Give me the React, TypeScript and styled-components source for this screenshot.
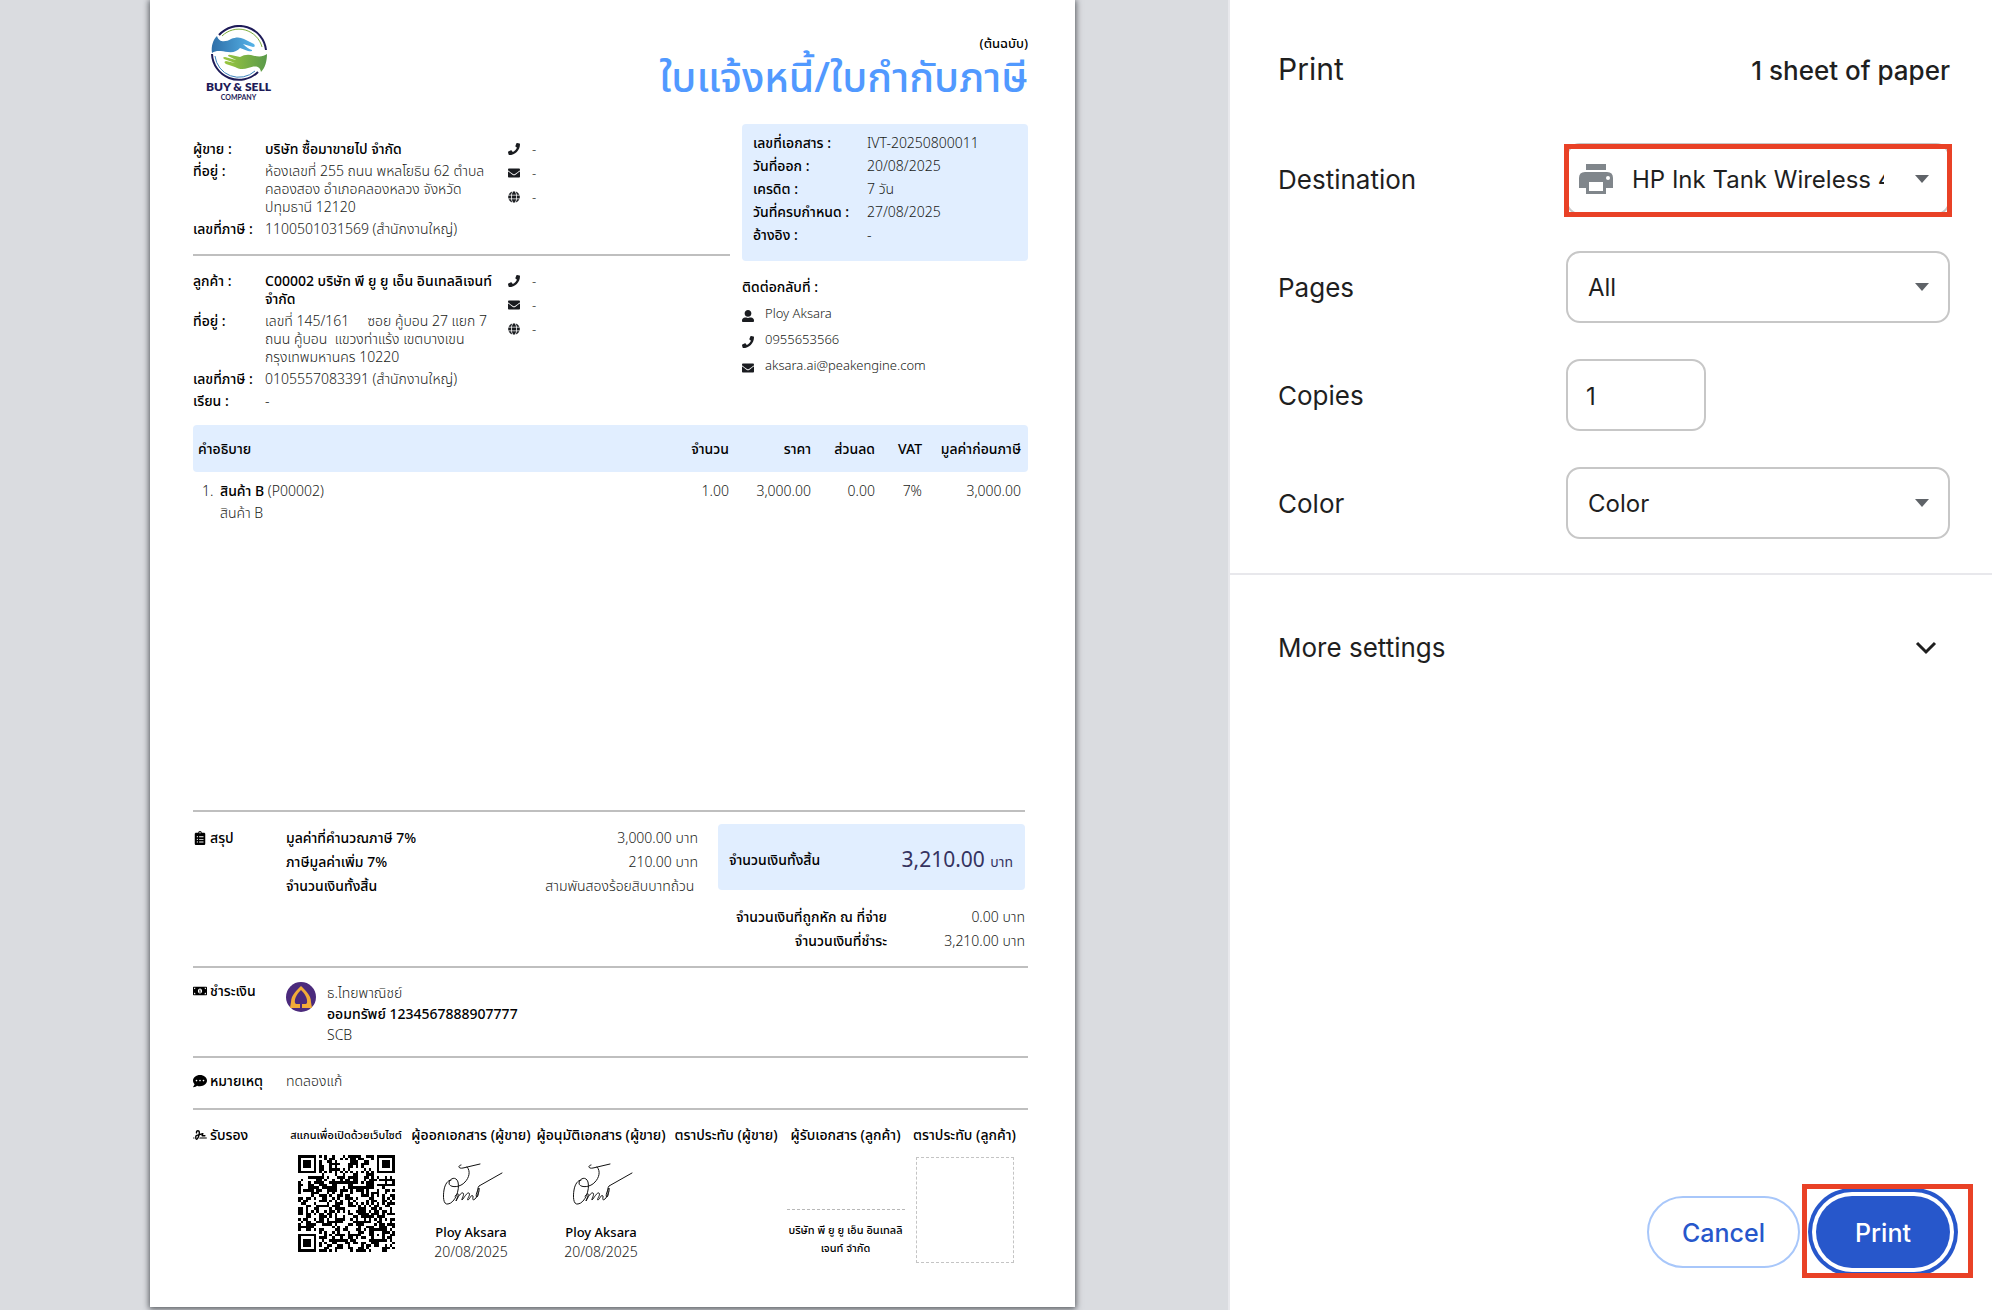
import React, { useState } from "react";
import styled, { createGlobalStyle } from "styled-components";
import { FaClipboardList, FaCommentDots, FaEnvelope, FaGlobe, FaMoneyBillAlt, FaPhone, FaUserAlt } from "react-icons/fa";
import { FaSignature } from "react-icons/fa6";

const THAI = `"Noto Sans", "Noto Sans Thai", sans-serif`;
const UI = `Inter, "Liberation Sans", sans-serif`;
const LINE = "#bfbfbf";
const TINT = "#e1eeff";
const BLUE = "#2757cb";
const INK = "#1a1c20";

const GlobalStyle = createGlobalStyle`
  *, *::before, *::after { box-sizing: border-box; }
  body { margin: 0; background: #fff; }
  h1, h2, p, dl, dd, dt { margin: 0; font: inherit; }
`;

/* ---------- shell ---------- */

const Shell = styled.div`
  display: flex;
  min-height: 100vh;
`;

const Preview = styled.main`
  flex: 1;
  min-width: 0;
  padding: 0 153px 3px 150px;
  background: #dadce0;
  display: flex;
`;

const Sheet = styled.article`
  flex: 1;
  min-width: 0;
  padding: 0 47px 0 43px;
  background: #fff;
  color: ${INK};
  font: 300 14px/18px ${THAI};
  box-shadow: 0 1px 6px 1px rgba(40, 44, 50, 0.75);
  display: flex;
  flex-direction: column;
`;

const Sidebar = styled.aside`
  flex: 0 0 764px;
  border-left: 2px solid #e8e8ec;
  background: #fff;
  color: #1f1f1f;
  font: 400 26px/32px ${UI};
  display: flex;
  flex-direction: column;
`;

/* ---------- document head ---------- */

const DocHead = styled.header`
  display: flex;
  justify-content: space-between;
  height: 124px;
`;

const Logo = styled.div`
  display: flex;
  flex-direction: column;
  align-items: center;
  padding: 25px 0 0 13px;
  color: #1e1b58;
  font-family: Lato, sans-serif;
`;

const LogoName = styled.span`
  font-size: 12px;
  font-weight: 800;
  line-height: 12px;
`;

const LogoSub = styled.span`
  font-size: 7px;
  font-weight: 700;
  line-height: 8px;
`;

const TitleBlock = styled.div`
  display: flex;
  flex-direction: column;
  align-items: flex-end;
  padding-top: 34px;
  color: #000;
  font-size: 13px;
  font-weight: 500;
`;

const DocTitle = styled.h1`
  color: #5199ff;
  font-size: 41px;
  font-weight: 500;
  line-height: 48px;
  white-space: nowrap;
`;

/* ---------- parties ---------- */

const Parties = styled.div`
  display: grid;
  grid-template-columns: minmax(0, 1fr) 286px;
  column-gap: 12px;
  min-height: 301px;
`;

const Party = styled.section`
  display: grid;
  grid-template-columns: 315px 1fr;
  padding-top: 16px;
`;

const Facts = styled.dl<{ $label: number; $gap: number }>`
  display: grid;
  grid-template-columns: ${(p) => p.$label}px 1fr;
  row-gap: ${(p) => p.$gap}px;
  align-content: start;
  white-space: nowrap;
`;

const Term = styled.dt`
  color: #000;
  font-weight: 500;
`;

const Value = styled.dd<{ $strong?: boolean }>`
  color: ${(p) => (p.$strong ? "#000" : "inherit")};
  font-weight: ${(p) => (p.$strong ? 500 : 300)};
  white-space: pre;
`;

const IconList = styled.div<{ $gap: number; $icon: number; $low?: boolean }>`
  display: grid;
  grid-template-columns: ${(p) => p.$icon}px 1fr;
  row-gap: ${(p) => p.$gap}px;
  align-content: start;
  align-items: ${(p) => (p.$low ? "end" : "center")};
  font-size: 13px;

  svg { width: 12px; height: 12px; display: block; }
`;

const Rule = styled.hr<{ $top?: number; $end?: number }>`
  border: 0;
  height: 2px;
  width: auto;
  margin: ${(p) => p.$top || 0}px ${(p) => p.$end || 0}px 0 0;
  background: ${LINE};
`;

const InfoBox = styled.div`
  height: 137px;
  padding: 10px 11px;
  border-radius: 4px;
  background: ${TINT};
`;

const ReturnTo = styled.section`
  padding-top: 17px;
  display: grid;
  row-gap: 8px;
`;

/* ---------- items ---------- */

const Items = styled.table`
  width: 100%;
  border-collapse: collapse;
  table-layout: fixed;

  th, td { padding: 0; text-align: right; white-space: nowrap; }
  th { height: 47px; background: ${TINT}; color: #000; font-weight: 500; }
  th:first-child { border-radius: 4px 0 0 4px; text-align: left; padding-left: 5px; }
  th:last-child { border-radius: 0 4px 4px 0; }
  th:last-child, td:last-child { padding-right: 7px; }
  td { vertical-align: top; padding-top: 10px; }
  td:first-child { text-align: left; padding-left: 9px; }
`;

const ItemCell = styled.div`
  display: grid;
  grid-template-columns: 18px 1fr;
  row-gap: 4px;

  p { grid-column: 2; }
`;

const Strong = styled.strong`
  color: #000;
  font-weight: 500;
`;

/* ---------- lower sections ---------- */

const Lower = styled.div`
  margin-top: auto;
`;

const Band = styled.section<{ $h: number; $top: number }>`
  display: grid;
  grid-template-columns: 93px minmax(0, 1fr);
  min-height: ${(p) => p.$h}px;
  padding-top: ${(p) => p.$top}px;
`;

const BandTitle = styled.h2`
  display: flex;
  align-items: flex-start;
  gap: 3px;
  color: #000;
  font-weight: 500;
  white-space: nowrap;

  svg { width: auto; height: 14px; margin-top: 2px; flex: none; }
`;

const Summary = styled.div`
  display: grid;
  grid-template-columns: 412px minmax(0, 1fr);
  column-gap: 20px;
  padding-right: 3px;
`;

const Lines = styled.dl<{ $cols: string }>`
  display: grid;
  grid-template-columns: ${(p) => p.$cols};
  row-gap: 6px;
  align-content: start;
  white-space: nowrap;

  dd { text-align: right; }
`;

const TotalBox = styled.div`
  display: flex;
  align-items: center;
  justify-content: space-between;
  height: 66px;
  margin: -5px 0 18px;
  padding: 6px 12px 0 11px;
  border-radius: 4px;
  background: ${TINT};
  color: #35335f;
`;

const TotalAmount = styled.span`
  font-size: 21px;
  font-weight: 400;
  line-height: 32px;

  small { font-size: 14px; }
`;

const DueLines = styled(Lines)`
  dt { text-align: right; }
`;

const Bank = styled.div`
  display: grid;
  grid-template-columns: 41px 1fr;

  p { line-height: 21px; }
`;

const Signers = styled.div`
  display: grid;
  grid-template-columns: 120px 130px 130px 120px 119px 119px;
  text-align: center;
  white-space: nowrap;
`;

const Signer = styled.div`
  display: flex;
  flex-direction: column;
  align-items: center;
  color: #000;
`;

const SignerTitle = styled.span<{ $small?: boolean }>`
  font-size: ${(p) => (p.$small ? 11 : 14)}px;
  font-weight: 500;
`;

const Signature = styled.svg`
  margin: 19px 0 17px 4px;
`;

const SignName = styled(Strong)`
  font-size: 13px;
`;

const SignDate = styled.span`
  color: ${INK};
  margin-top: 2px;
`;

const SignLine = styled.div`
  width: 118px;
  margin: 65px 0 11px;
  border-top: 1px dashed #b8b8b8;
`;

const SignCompany = styled.span`
  font-size: 11px;
  font-weight: 500;
`;

const StampBox = styled.div`
  width: 98px;
  height: 106px;
  margin-top: 13px;
  border: 1px dashed #c4c4c4;
`;

const QrWrap = styled.div`
  margin-top: 11px;
  line-height: 0;
`;

/* ---------- print settings ---------- */

const SideHead = styled.header`
  display: flex;
  justify-content: space-between;
  align-items: baseline;
  padding: 51px 42px 56px 48px;
  font-weight: 500;

  h1 { font-size: 30px; line-height: 36px; font-weight: 400; }
`;

const Fields = styled.div`
  display: grid;
  row-gap: 36px;
  padding: 0 42px 34px 48px;
`;

const Field = styled.div`
  display: grid;
  grid-template-columns: 1fr 384px;
  align-items: center;
  font-size: 26px;

  label { padding-top: 2px; }
`;

const Control = styled.div`
  position: relative;
  display: flex;
`;

const Box = `
  height: 72px;
  border: 2px solid #c7c7c7;
  border-radius: 14px;
  background: #fff;
  color: #1f1f1f;
  font: 400 24px/32px ${UI};
`;

const Select = styled.select<{ $icon?: boolean }>`
  ${Box}
  width: 100%;
  appearance: none;
  padding: 2px 64px 0 ${(p) => (p.$icon ? 64 : 20)}px;
`;

const NumberInput = styled.input`
  ${Box}
  width: 140px;
  padding: 2px 18px 0;
`;

const Caret = styled.span`
  position: absolute;
  right: 21px;
  top: 32px;
  border: 7px solid transparent;
  border-top: 8px solid #5f6368;
  border-bottom: 0;
  pointer-events: none;
`;

const PrinterIcon = styled.svg`
  position: absolute;
  left: 13px;
  top: 21px;
  pointer-events: none;
`;

const Marker = styled.span<{ $inset: string }>`
  position: absolute;
  inset: ${(p) => p.$inset};
  border: 5px solid #e94126;
  pointer-events: none;
`;

const MoreButton = styled.button`
  display: flex;
  justify-content: space-between;
  align-items: center;
  padding: 57px 55px 57px 48px;
  border: 0;
  border-top: 2px solid #e8e8ec;
  background: none;
  color: inherit;
  font: inherit;
`;

const Actions = styled.footer`
  display: flex;
  justify-content: flex-end;
  gap: 16px;
  margin-top: auto;
  padding: 0 42px 42px 0;
`;

const Pill = styled.button<{ $primary?: boolean }>`
  height: 72px;
  width: ${(p) => (p.$primary ? 134 : 153)}px;
  border-radius: 36px;
  border: ${(p) => (p.$primary ? "0" : "2px solid #a8c7fa")};
  background: ${(p) => (p.$primary ? BLUE : "#fff")};
  color: ${(p) => (p.$primary ? "#fff" : BLUE)};
  box-shadow: ${(p) => (p.$primary ? `0 0 0 4px #fff, 0 0 0 8px ${BLUE}` : "none")};
  padding: 2px 0 0;
  font: 500 25px/32px ${UI};
`;

/* ---------- drawings ---------- */

function HandsLogo() {
  return (
    <svg width="56" height="56" viewBox="0 0 56 56" fill="none" aria-hidden="true">
      <defs>
        <linearGradient id="sky" x1="0" x2="1"><stop stopColor="#2f6fa8" /><stop offset="1" stopColor="#56b4e9" /></linearGradient>
        <linearGradient id="leaf" x1="0" x2="1"><stop stopColor="#9cc83f" /><stop offset="1" stopColor="#5a9a4a" /></linearGradient>
      </defs>
      <path d="M8 10A27 27 0 0 1 55 25" stroke="#1e1b58" strokeWidth="2" />
      <path d="M11 11A24 24 0 0 1 51 22" stroke="#7fae3c" strokeWidth="1" />
      <path d="M1 29A27 27 0 0 0 47 47" stroke="#1e1b58" strokeWidth="2" />
      <path d="M4 31A24 24 0 0 0 44 46" stroke="#3c84bd" strokeWidth="1" />
      <path d="M6 11C8 18 15 17 20 14C25 12 29 12 33 14L43 19Q45 22 42 22L32 19Q37 24 41 25Q42 27 37 26L29 23Q25 28 17 27C10 26 5 25 1 28C0 21 2 15 6 11Z" fill="url(#sky)" />
      <path d="M50 47C49 40 43 41 37 43C32 45 27 44 24 42L15 39Q12 37 15 36L24 38L13 34Q11 32 14 32L25 35L17 31Q17 29 20 30L29 32Q34 29 40 30C47 32 52 32 56 29C56 36 54 43 50 47Z" fill="url(#leaf)" />
    </svg>
  );
}

const QR_SIZE = 37;

function isDark(x: number, y: number) {
  const far = QR_SIZE - 7;
  const corner = (cx: number, cy: number) => x >= cx - 1 && x <= cx + 7 && y >= cy - 1 && y <= cy + 7;
  for (const [cx, cy] of [[0, 0], [far, 0], [0, far]]) {
    if (corner(cx, cy)) {
      const d = Math.max(Math.abs(x - cx - 3), Math.abs(y - cy - 3));
      return d === 3 || d < 2;
    }
  }
  const a = Math.max(Math.abs(x - 30), Math.abs(y - 30));
  if (a <= 2) return a !== 1;
  if (x === 6 || y === 6) return (x + y) % 2 === 0;
  const n = Math.sin(x * 127 + y * 311 + 17) * 43758;
  return n - Math.floor(n) < 0.52;
}

function QrCode() {
  let d = "";
  for (let y = 0; y < QR_SIZE; y++)
    for (let x = 0; x < QR_SIZE; x++) if (isDark(x, y)) d += `M${x} ${y}h1v1h-1z`;
  return (
    <svg width="97" height="97" viewBox="0 0 37 37" shapeRendering="crispEdges" role="img" aria-label="QR">
      <path d={d} />
    </svg>
  );
}

function Signed() {
  return (
    <Signature width="60" height="43" viewBox="0 0 60 43" fill="none" stroke="#111" strokeWidth="1" strokeLinecap="round" strokeLinejoin="round" aria-hidden="true">
      <path d="M18 2C14 3 16 6 20 5L37 1M24 4C28 8 26 15 22 19C17 25 6 25 6 20C7 15 13 13 15 19C17 27 12 40 5 41C0 42 0 33 1 27C2 21 5 17 8 17" />
      <path d="M12 33C14 31 16 29 15 33L13 38C15 34 18 29 20 30C22 31 18 37 19 37C21 35 24 29 26 30C28 32 23 37 25 37C27 36 28 31 30 33C30 36 29 38 32 36C34 34 37 28 36 25C34 28 32 34 34 34C37 31 33 27 36 23L59 10" />
    </Signature>
  );
}

function BankLogo() {
  return (
    <svg width="30" height="30" viewBox="0 0 30 30" aria-hidden="true">
      <circle cx="15" cy="15" r="15" fill="#4b2a7c" />
      <path fill="#f2ab38" fillRule="evenodd" d="M15 4C11 8 5 13 5 20L4 26H14V22H10L9 21C8 16 12 11 15 8C18 11 22 16 21 21L20 22H16V26H26L25 20C25 13 19 8 15 4Z" />
    </svg>
  );
}

/* ---------- data ---------- */

const seller = [
  ["ผู้ขาย :", "บริษัท ซื้อมาขายไป จำกัด"],
  ["ที่อยู่ :", "ห้องเลขที่ 255 ถนน พหลโยธิน 62 ตำบล\nคลองสอง อำเภอคลองหลวง จังหวัด\nปทุมธานี 12120"],
  ["เลขที่ภาษี :", "1100501031569 (สำนักงานใหญ่)"],
];

const customer = [
  ["ลูกค้า :", "C00002 บริษัท พี ยู ยู เอ็น อินเทลลิเจนท์\nจำกัด"],
  ["ที่อยู่ :", "เลขที่ 145/161     ซอย คู้บอน 27 แยก 7\nถนน คู้บอน  แขวงท่าแร้ง เขตบางเขน\nกรุงเทพมหานคร 10220"],
  ["เลขที่ภาษี :", "0105557083391 (สำนักงานใหญ่)"],
  ["เรียน :", "-"],
];

const info = [
  ["เลขที่เอกสาร :", "IVT-20250800011"],
  ["วันที่ออก :", "20/08/2025"],
  ["เครดิต :", "7 วัน"],
  ["วันที่ครบกำหนด :", "27/08/2025"],
  ["อ้างอิง :", "-"],
];

function PartyBlock({ rows }: { rows: string[][] }) {
  return (
    <Party>
      <Facts $label={72} $gap={4}>
        {rows.map(([k, v], i) => (
          <React.Fragment key={k}>
            <Term>{k}</Term>
            <Value $strong={i === 0}>{v}</Value>
          </React.Fragment>
        ))}
      </Facts>
      <IconList $icon={24} $gap={6}>
        <FaPhone /><span>-</span>
        <FaEnvelope /><span>-</span>
        <FaGlobe /><span>-</span>
      </IconList>
    </Party>
  );
}

function Invoice() {
  return (
    <Sheet lang="th">
      <DocHead>
        <Logo>
          <HandsLogo />
          <LogoName>BUY &amp; SELL</LogoName>
          <LogoSub>COMPANY</LogoSub>
        </Logo>
        <TitleBlock>
          <span>(ต้นฉบับ)</span>
          <DocTitle>ใบแจ้งหนี้/ใบกำกับภาษี</DocTitle>
        </TitleBlock>
      </DocHead>

      <Parties>
        <div>
          <PartyBlock rows={seller} />
          <Rule $top={16} />
          <PartyBlock rows={customer} />
        </div>
        <div>
          <InfoBox>
            <Facts $label={114} $gap={5}>
              {info.map(([k, v]) => (
                <React.Fragment key={k}>
                  <Term>{k}</Term>
                  <Value>{v}</Value>
                </React.Fragment>
              ))}
            </Facts>
          </InfoBox>
          <ReturnTo>
            <Strong>ติดต่อกลับที่ :</Strong>
            <IconList $icon={23} $gap={8} $low>
              <FaUserAlt /><span>Ploy Aksara</span>
              <FaPhone /><span>0955653566</span>
              <FaEnvelope /><span>aksara.ai@peakengine.com</span>
            </IconList>
          </ReturnTo>
        </div>
      </Parties>

      <Items>
        <colgroup>
          <col />
          <col width="100" />
          <col width="82" />
          <col width="64" />
          <col width="47" />
          <col width="106" />
        </colgroup>
        <thead>
          <tr>
            <th>คำอธิบาย</th><th>จำนวน</th><th>ราคา</th><th>ส่วนลด</th><th>VAT</th><th>มูลค่าก่อนภาษี</th>
          </tr>
        </thead>
        <tbody>
          <tr>
            <td>
              <ItemCell>
                <span>1.</span>
                <span><Strong>สินค้า B</Strong> (P00002)</span>
                <p>สินค้า B</p>
              </ItemCell>
            </td>
            <td>1.00</td><td>3,000.00</td><td>0.00</td><td>7%</td><td>3,000.00</td>
          </tr>
        </tbody>
      </Items>

      <Lower>
        <Rule $end={3} />
        <Band $h={154} $top={17}>
          <BandTitle><FaClipboardList />สรุป</BandTitle>
          <Summary>
            <Lines $cols="1fr auto">
              <Term>มูลค่าที่คำนวณภาษี 7%</Term><Value>3,000.00 บาท</Value>
              <Term>ภาษีมูลค่าเพิ่ม 7%</Term><Value>210.00 บาท</Value>
              <Term>จำนวนเงินทั้งสิ้น</Term><Value>{"สามพันสองร้อยสิบบาทถ้วน "}</Value>
            </Lines>
            <div>
              <TotalBox>
                <Strong>จำนวนเงินทั้งสิ้น</Strong>
                <TotalAmount>3,210.00 <small>บาท</small></TotalAmount>
              </TotalBox>
              <DueLines $cols="169px 1fr">
                <Term>จำนวนเงินที่ถูกหัก ณ ที่จ่าย</Term><Value>0.00 บาท</Value>
                <Term>จำนวนเงินที่ชำระ</Term><Value>3,210.00 บาท</Value>
              </DueLines>
            </div>
          </Summary>
        </Band>
        <Rule />
        <Band $h={88} $top={14}>
          <BandTitle><FaMoneyBillAlt />ชำระเงิน</BandTitle>
          <Bank>
            <BankLogo />
            <div>
              <p>ธ.ไทยพาณิชย์</p>
              <p><Strong>ออมทรัพย์ 1234567888907777</Strong></p>
              <p>SCB</p>
            </div>
          </Bank>
        </Band>
        <Rule />
        <Band $h={50} $top={14}>
          <BandTitle><FaCommentDots />หมายเหตุ</BandTitle>
          <p>ทดลองแก้</p>
        </Band>
        <Rule />
        <Band $h={197} $top={16}>
          <BandTitle><FaSignature />รับรอง</BandTitle>
          <Signers>
            <Signer>
              <SignerTitle $small>สแกนเพื่อเปิดด้วยเว็บไซต์</SignerTitle>
              <QrWrap><QrCode /></QrWrap>
            </Signer>
            {["ผู้ออกเอกสาร (ผู้ขาย)", "ผู้อนุมัติเอกสาร (ผู้ขาย)"].map((t) => (
              <Signer key={t}>
                <SignerTitle>{t}</SignerTitle>
                <Signed />
                <SignName>Ploy Aksara</SignName>
                <SignDate>20/08/2025</SignDate>
              </Signer>
            ))}
            <Signer><SignerTitle>ตราประทับ (ผู้ขาย)</SignerTitle></Signer>
            <Signer>
              <SignerTitle>ผู้รับเอกสาร (ลูกค้า)</SignerTitle>
              <SignLine />
              <SignCompany>บริษัท พี ยู ยู เอ็น อินเทลลิ<br />เจนท์ จำกัด</SignCompany>
            </Signer>
            <Signer>
              <SignerTitle>ตราประทับ (ลูกค้า)</SignerTitle>
              <StampBox />
            </Signer>
          </Signers>
        </Band>
      </Lower>
    </Sheet>
  );
}

function PrintPanel() {
  const [copies, setCopies] = useState("1");
  return (
    <Sidebar>
      <SideHead>
        <h1>Print</h1>
        <span>1 sheet of paper</span>
      </SideHead>
      <Fields>
        <Field>
          <label htmlFor="dest">Destination</label>
          <Control>
            <Select id="dest" $icon><option>HP Ink Tank Wireless 410 series</option></Select>
            <PrinterIcon width="34" height="31" viewBox="0 0 34 31" aria-hidden="true">
              <path fill="#80868b" fillRule="evenodd" d="M7 0H27V6H7ZM6 8H28Q34 8 34 14V24H27V30H7V24H0V14Q0 8 6 8ZM10 18V27H24V18ZM29 12A2 2 0 1 0 29 16A2 2 0 1 0 29 12Z" />
            </PrinterIcon>
            <Caret />
            <Marker $inset="1px -2px -2px" />
          </Control>
        </Field>
        <Field>
          <label htmlFor="pages">Pages</label>
          <Control>
            <Select id="pages"><option>All</option></Select>
            <Caret />
          </Control>
        </Field>
        <Field>
          <label htmlFor="copies">Copies</label>
          <Control>
            <NumberInput id="copies" inputMode="numeric" value={copies} onChange={(e) => setCopies(e.target.value)} />
          </Control>
        </Field>
        <Field>
          <label htmlFor="color">Color</label>
          <Control>
            <Select id="color"><option>Color</option></Select>
            <Caret />
          </Control>
        </Field>
      </Fields>
      <MoreButton type="button">
        More settings
        <svg width="22" height="14" viewBox="0 0 22 14" fill="none" stroke="#1f1f1f" strokeWidth="3" aria-hidden="true">
          <path d="M2 2L11 11L20 2" />
        </svg>
      </MoreButton>
      <Actions>
        <Pill type="button">Cancel</Pill>
        <Control>
          <Pill type="button" $primary>Print</Pill>
          <Marker $inset="-12px -23px -10px -14px" />
        </Control>
      </Actions>
    </Sidebar>
  );
}

export default function App() {
  return (
    <Shell>
      <GlobalStyle />
      <Preview><Invoice /></Preview>
      <PrintPanel />
    </Shell>
  );
}
